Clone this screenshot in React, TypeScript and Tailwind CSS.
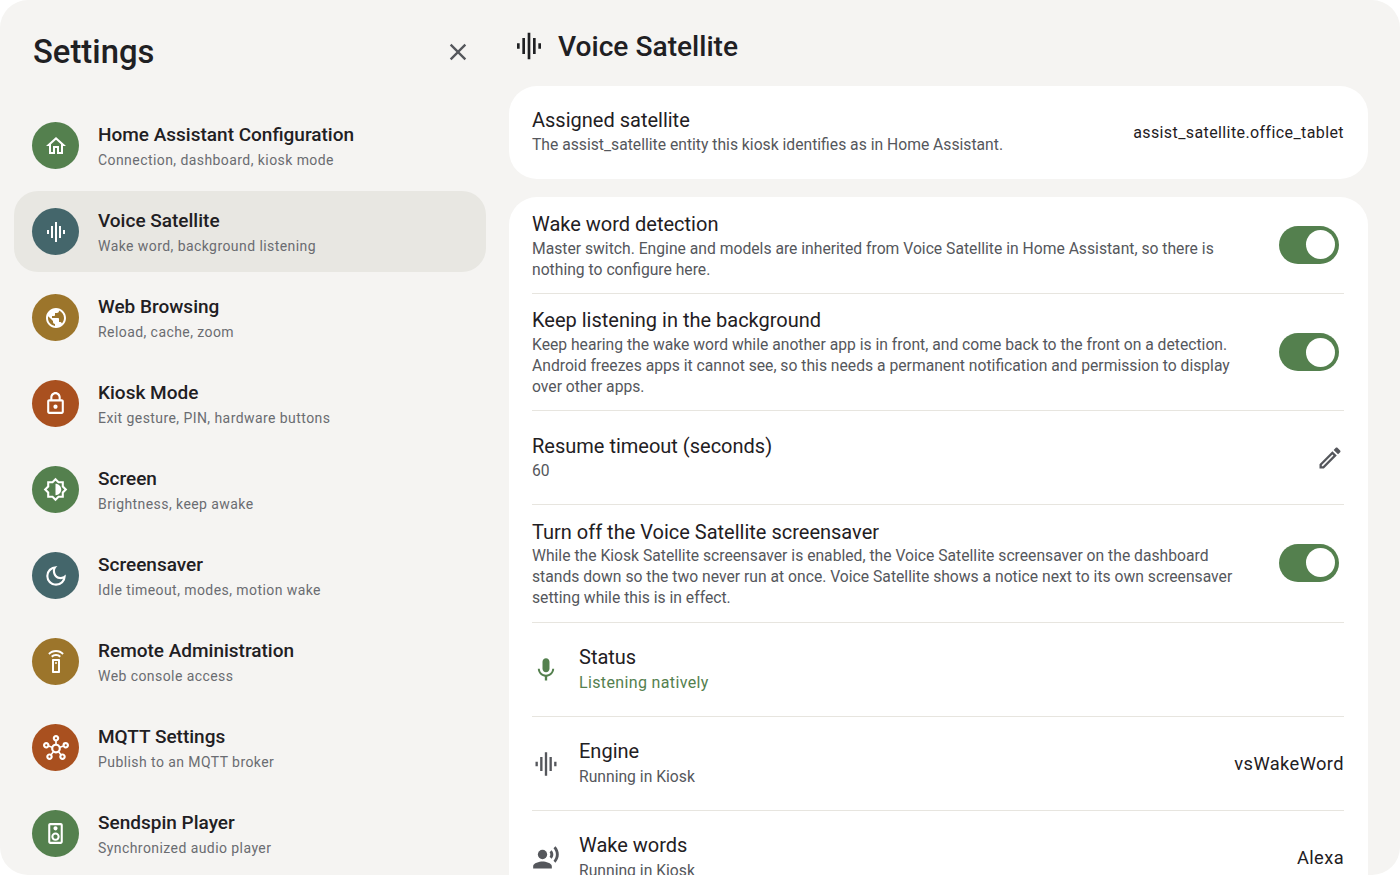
import {
  MdClose,
  MdGraphicEq,
  MdMic,
  MdOutlineBrightness6,
  MdOutlineDarkMode,
  MdOutlineEdit,
  MdOutlineHome,
  MdOutlineHub,
  MdOutlineLock,
  MdOutlineSettingsRemote,
  MdOutlineSpeaker,
  MdPublic,
  MdRecordVoiceOver,
} from 'react-icons/md';
import type { ReactNode } from 'react';

const GREEN = 'bg-[#54804e]';
const TEAL = 'bg-[#44666b]';
const GOLD = 'bg-[#9c752b]';
const RUST = 'bg-[#a9501f]';

const navItems = [
  { title: 'Home Assistant Configuration', sub: 'Connection, dashboard, kiosk mode', color: GREEN, icon: <MdOutlineHome size={24} /> },
  { title: 'Voice Satellite', sub: 'Wake word, background listening', color: TEAL, icon: <MdGraphicEq size={24} />, active: true },
  { title: 'Web Browsing', sub: 'Reload, cache, zoom', color: GOLD, icon: <MdPublic size={24} /> },
  { title: 'Kiosk Mode', sub: 'Exit gesture, PIN, hardware buttons', color: RUST, icon: <MdOutlineLock size={25} /> },
  { title: 'Screen', sub: 'Brightness, keep awake', color: GREEN, icon: <MdOutlineBrightness6 size={25} /> },
  { title: 'Screensaver', sub: 'Idle timeout, modes, motion wake', color: TEAL, icon: <MdOutlineDarkMode size={26} /> },
  { title: 'Remote Administration', sub: 'Web console access', color: GOLD, icon: <MdOutlineSettingsRemote size={24} /> },
  { title: 'MQTT Settings', sub: 'Publish to an MQTT broker', color: RUST, icon: <MdOutlineHub size={26} /> },
  { title: 'Sendspin Player', sub: 'Synchronized audio player', color: GREEN, icon: <MdOutlineSpeaker size={25} /> },
];

function Toggle({ className = '' }: { className?: string }) {
  return (
    <div className={`w-[60px] h-[38px] mr-[5px] shrink-0 rounded-full bg-[#54804e] flex items-center justify-end pr-[4px] ${className}`}>
      <div className="w-[29px] h-[29px] rounded-full bg-white" />
    </div>
  );
}

function ToggleRow({
  title,
  desc,
  titleClass = 'leading-[27px]',
  className = 'pb-[13px]',
  toggleClass,
}: {
  title: string;
  desc: string;
  titleClass?: string;
  className?: string;
  toggleClass?: string;
}) {
  return (
    <div className={`flex items-center border-b border-[#e7e5df] pt-[13px] ${className}`}>
      <div className="flex-1 pr-[32px]">
        <div className={`text-[20px] text-[#1f2023] ${titleClass}`}>{title}</div>
        <div className="text-[15.7px] leading-[21px] text-[#55575c]">{desc}</div>
      </div>
      <Toggle className={toggleClass} />
    </div>
  );
}

function IconRow({
  icon,
  title,
  sub,
  subClass = 'text-[15.7px] text-[#55575c]',
  value,
  last,
}: {
  icon: ReactNode;
  title: string;
  sub: string;
  subClass?: string;
  value?: string;
  last?: boolean;
}) {
  return (
    <div className={`flex items-center h-[94px] shrink-0 ${last ? '' : 'border-b border-[#e7e5df]'}`}>
      <div className="w-[47px] shrink-0 flex">{icon}</div>
      <div className="flex-1">
        <div className="text-[20px] leading-[25px] text-[#1f2023]">{title}</div>
        <div className={`leading-[25px] ${subClass}`}>{sub}</div>
      </div>
      {value && <div className="text-[18.3px] tracking-[0.4px] text-[#1f2023]">{value}</div>}
    </div>
  );
}

export default function App() {
  return (
    <div className="w-[1400px] h-[875px] bg-white font-['Roboto',sans-serif]">
      <div className="w-full h-full rounded-[28px] bg-[#f5f4f2] flex overflow-hidden">
        <aside className="w-[509px] shrink-0 flex flex-col overflow-hidden">
          <div className="h-[105px] shrink-0 flex items-start justify-between pl-[33px] pr-[37px]">
            <h1 className="mt-[31px] text-[32.8px] leading-[42px] font-medium text-[#1f2023]">Settings</h1>
            <button className="mt-[38px] text-[#55575c]">
              <MdClose size={28} />
            </button>
          </div>
          <nav className="flex flex-col gap-[5px] ml-[14px] mr-[23px]">
            {navItems.map((item) => (
              <div
                key={item.title}
                className={`h-[81px] shrink-0 flex items-center gap-[19px] px-[18px] rounded-[24px] ${item.active ? 'bg-[#e8e7e2]' : ''}`}
              >
                <div className={`w-[47px] h-[47px] rounded-full flex items-center justify-center text-white ${item.color}`}>
                  {item.icon}
                </div>
                <div className="pt-[4px]">
                  <div className="text-[19px] leading-[26px] font-medium text-[#1f2023]">{item.title}</div>
                  <div className="text-[14px] leading-[25px] tracking-[0.43px] text-[#6a6c71]">{item.sub}</div>
                </div>
              </div>
            ))}
          </nav>
        </aside>

        <main className="flex-1 pr-[32px] flex flex-col overflow-hidden">
          <div className="h-[86px] shrink-0 flex items-start gap-[13px] pl-[4px] pt-[26px] text-[#1f2023]">
            <MdGraphicEq size={32} className="mt-[4px]" />
            <h2 className="mt-px text-[28.15px] leading-[40px] font-medium">Voice Satellite</h2>
          </div>
          <section className="h-[93px] shrink-0 rounded-[28px] bg-white pl-[23px] pr-[24px] flex items-center justify-between">
            <div className="pb-[4px]">
              <div className="text-[20px] leading-[27px] text-[#1f2023]">Assigned satellite</div>
              <div className="text-[15.7px] leading-[21px] text-[#55575c]">
                The assist_satellite entity this kiosk identifies as in Home Assistant.
              </div>
            </div>
            <div className="text-[16px] tracking-[0.4px] text-[#1f2023]">assist_satellite.office_tablet</div>
          </section>
          <section className="mt-[18px] flex-1 min-h-0 rounded-t-[28px] bg-white pl-[23px] pr-[24px] pt-px flex flex-col overflow-hidden">
            <ToggleRow
              toggleClass="mb-[2px]"
              title="Wake word detection"
              desc="Master switch. Engine and models are inherited from Voice Satellite in Home Assistant, so there is nothing to configure here."
            />
            <ToggleRow
              title="Keep listening in the background"
              desc="Keep hearing the wake word while another app is in front, and come back to the front on a detection. Android freezes apps it cannot see, so this needs a permanent notification and permission to display over other apps."
            />
            <div className="h-[94px] shrink-0 flex items-center justify-between border-b border-[#e7e5df]">
              <div className="pt-[2px]">
                <div className="text-[20px] leading-[25px] text-[#1f2023]">Resume timeout (seconds)</div>
                <div className="text-[15.7px] leading-[24px] text-[#55575c]">60</div>
              </div>
              <MdOutlineEdit size={28} className="text-[#55575c]" />
            </div>
            <ToggleRow
              className="pb-[14px]"
              titleClass="leading-[25px] pt-[2px]"
              toggleClass="mb-[1px]"
              title="Turn off the Voice Satellite screensaver"
              desc="While the Kiosk Satellite screensaver is enabled, the Voice Satellite screensaver on the dashboard stands down so the two never run at once. Voice Satellite shows a notice next to its own screensaver setting while this is in effect."
            />
            <IconRow
              icon={<MdMic size={28} className="text-[#54804e]" />}
              title="Status"
              sub="Listening natively"
              subClass="text-[16px] tracking-[0.36px] text-[#54804e]"
            />
            <IconRow
              icon={<MdGraphicEq size={28} className="text-[#55575c]" />}
              title="Engine"
              sub="Running in Kiosk"
              value="vsWakeWord"
            />
            <IconRow
              icon={<MdRecordVoiceOver size={28} className="text-[#55575c]" />}
              title="Wake words"
              sub="Running in Kiosk"
              value="Alexa"
              last
            />
          </section>
        </main>
      </div>
    </div>
  );
}
